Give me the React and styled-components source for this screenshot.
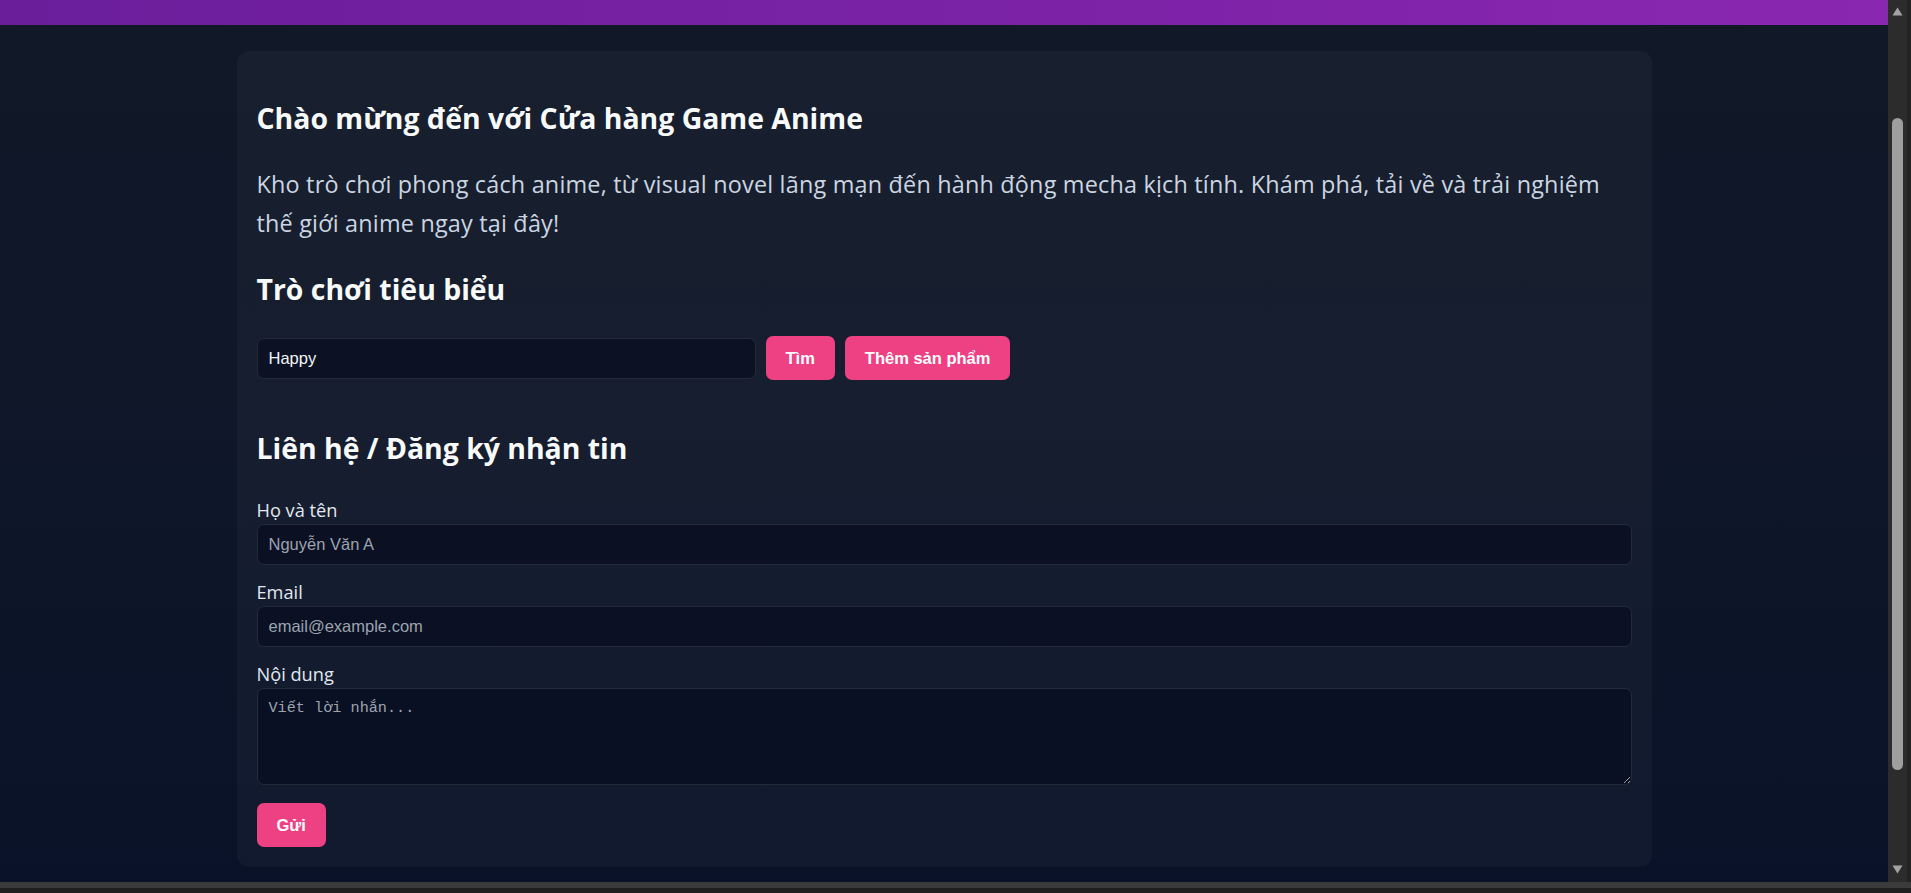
import styled, { createGlobalStyle } from "styled-components";

const GlobalStyle = createGlobalStyle`
  html, body {
    margin: 0;
    padding: 0;
    height: 100%;
    overflow: hidden;
    background: #1f1f1f;
  }
  #root {
    height: 100%;
  }
  * {
    box-sizing: border-box;
  }
`;

const Frame = styled.div`
  height: 100vh;
  display: flex;
  flex-direction: column;
  overflow: hidden;
`;

const Window = styled.div`
  flex: 1;
  min-height: 0;
  display: flex;
`;

const Viewport = styled.div`
  flex: 1;
  min-width: 0;
  overflow: hidden;
  display: flex;
  flex-direction: column;
  background: linear-gradient(180deg, #111827 0%, #0f1729 45%, #0a1229 100%);
  font-family: "Open Sans", "Noto Sans", sans-serif;
`;

const TopBar = styled.header`
  height: 25px;
  flex-shrink: 0;
  background: linear-gradient(90deg, #6a1e9a 0%, #7a22a6 50%, #8a27b0 100%);
`;

const Main = styled.main`
  padding: 26px 0 0;
`;

const Card = styled.section`
  width: 1415px;
  margin: 0 auto;
  padding: 20px;
  border-radius: 12px;
  background: rgba(255, 255, 255, 0.03);
`;

const Heading = styled.h2`
  margin: ${(p) => p.$top}px 0 0;
  font-size: 28.4px;
  line-height: 36px;
  font-weight: 700;
  color: #f8fafc;
`;

const Intro = styled.p`
  margin: 29px 0 0;
  font-size: 23.4px;
  line-height: 39px;
  letter-spacing: 0.2px;
  color: #cbd5e1;
`;

const SearchRow = styled.div`
  margin-top: 29px;
  display: flex;
  align-items: center;
  gap: 10px;
`;

const TextInput = styled.input`
  display: block;
  width: ${(p) => p.$width || "100%"};
  height: 41px;
  padding: 0 11px;
  border: 1px solid #232a3a;
  border-radius: 7px;
  background: rgba(2, 6, 23, 0.5);
  color: #f1f5f9;
  font-family: "Liberation Sans", Arial, sans-serif;
  font-size: 16.5px;
  outline: none;
  &::placeholder {
    color: #9ca3af;
  }
`;

const Button = styled.button`
  height: 44px;
  padding: 0 20px;
  border: none;
  border-radius: 7px;
  background: #ee4184;
  color: #ffffff;
  font-family: "Liberation Sans", Arial, sans-serif;
  font-size: 16.5px;
  font-weight: 700;
  cursor: pointer;
  margin-top: ${(p) => p.$top || 0}px;
`;

const Form = styled.form`
  margin-top: 32px;
  display: flex;
  flex-direction: column;
  align-items: flex-start;
`;

const Field = styled.div`
  width: 100%;
  margin-top: ${(p) => (p.$first ? 0 : 15)}px;
`;

const Label = styled.label`
  display: block;
  margin-bottom: 2px;
  font-size: 18.2px;
  line-height: 24px;
  color: #e2e8f0;
`;

const TextArea = styled.textarea`
  display: block;
  width: 100%;
  height: 97px;
  padding: 10px 11px;
  border: 1px solid #232a3a;
  border-radius: 7px;
  background: rgba(2, 6, 23, 0.5);
  color: #f1f5f9;
  font-family: "Liberation Mono", "DejaVu Sans Mono", monospace;
  font-size: 15.2px;
  outline: none;
  resize: vertical;
  &::placeholder {
    color: #9ca3af;
  }
`;

const Scrollbar = styled.div`
  width: 19px;
  flex-shrink: 0;
  display: flex;
  flex-direction: column;
  align-items: center;
  background: #2c2c2c;
`;

const Arrow = styled.div`
  height: ${(p) => p.$h}px;
  display: flex;
  align-items: ${(p) => (p.$down ? "flex-end" : "flex-start")};
  padding: ${(p) => (p.$down ? "0 0 8px" : "7px 0 0")};
`;

const Thumb = styled.div`
  width: 11px;
  height: 652px;
  margin-top: 101px;
  border-radius: 6px;
  background: #9f9f9f;
`;

const Spacer = styled.div`
  flex: 1;
`;

const Edge = styled.div`
  width: 4px;
  flex-shrink: 0;
  background: #232323;
`;

const StatusBar = styled.div`
  height: 11px;
  flex-shrink: 0;
  border-top: 6px solid #3b3b3b;
  background: #1f1f1f;
`;

const Triangle = ({ down }) => (
  <svg width="11" height="9" viewBox="0 0 11 9">
    <path
      d={down ? "M0.5 0.5 H10.5 L5.5 8.5 Z" : "M5.5 0.5 L10.5 8.5 H0.5 Z"}
      fill="#a3a3a3"
    />
  </svg>
);

export default function App() {
  return (
    <>
      <GlobalStyle />
      <Frame>
        <Window>
          <Viewport>
            <TopBar />
            <Main>
              <Card>
                <Heading $top={29}>Chào mừng đến với Cửa hàng Game Anime</Heading>
                <Intro>
                  Kho trò chơi phong cách anime, từ visual novel lãng mạn đến hành động
                  mecha kịch tính. Khám phá, tải về và trải nghiệm thế giới anime ngay
                  tại đây!
                </Intro>
                <Heading $top={28}>Trò chơi tiêu biểu</Heading>
                <SearchRow>
                  <TextInput $width="499px" defaultValue="Happy" />
                  <Button type="button">Tìm</Button>
                  <Button type="button">Thêm sản phẩm</Button>
                </SearchRow>
                <Heading $top={50}>Liên hệ / Đăng ký nhận tin</Heading>
                <Form onSubmit={(e) => e.preventDefault()}>
                  <Field $first>
                    <Label htmlFor="name">Họ và tên</Label>
                    <TextInput id="name" placeholder="Nguyễn Văn A" />
                  </Field>
                  <Field>
                    <Label htmlFor="email">Email</Label>
                    <TextInput id="email" type="email" placeholder="email@example.com" />
                  </Field>
                  <Field>
                    <Label htmlFor="message">Nội dung</Label>
                    <TextArea id="message" placeholder="Viết lời nhắn..." />
                  </Field>
                  <Button type="submit" $top={18}>
                    Gửi
                  </Button>
                </Form>
              </Card>
            </Main>
          </Viewport>
          <Scrollbar>
            <Arrow $h={17}>
              <Triangle />
            </Arrow>
            <Thumb />
            <Spacer />
            <Arrow $h={24} $down>
              <Triangle down />
            </Arrow>
          </Scrollbar>
          <Edge />
        </Window>
        <StatusBar />
      </Frame>
    </>
  );
}
